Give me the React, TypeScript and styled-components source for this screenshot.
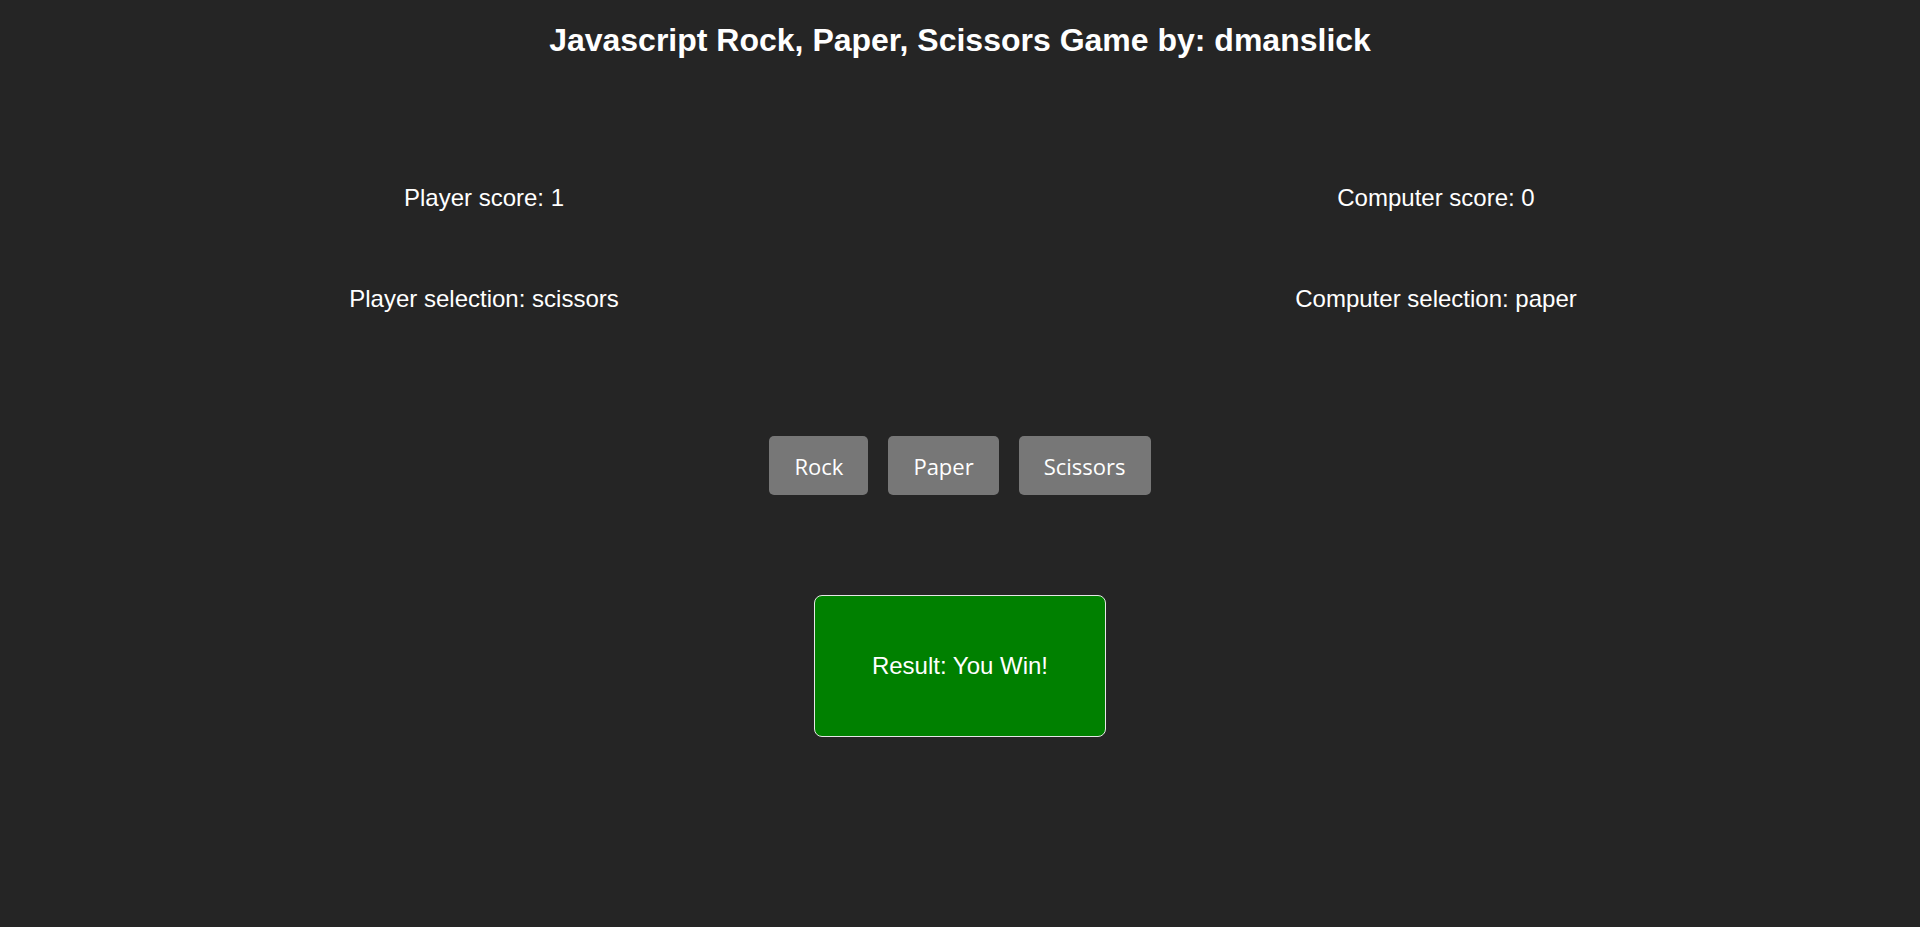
import React from "react";
import styled, { createGlobalStyle } from "styled-components";

const GlobalStyle = createGlobalStyle`
    html, body {
        margin: 0;
        padding: 0;
        background: #252525;
    }

    body {
        min-height: 927px;
        color: #ffffff;
        font-family: "Liberation Sans", Arial, sans-serif;
    }
`;

type Side = {
    name: string;
    score: number;
    selection: string;
};

const sides: Side[] = [
    { name: "Player", score: 1, selection: "scissors" },
    { name: "Computer", score: 0, selection: "paper" },
];

const choices = ["Rock", "Paper", "Scissors"];

const App: React.FC = () => {
    return (
        <>
            <GlobalStyle />
            <Page>
                <Title>Javascript Rock, Paper, Scissors Game by: dmanslick</Title>
                <ScoreBoard>
                    {sides.map((side) => (
                        <SideColumn key={side.name}>
                            <Line>
                                {side.name} score: {side.score}
                            </Line>
                            <Line>
                                {side.name} selection: {side.selection}
                            </Line>
                        </SideColumn>
                    ))}
                </ScoreBoard>
                <Choices>
                    {choices.map((choice) => (
                        <ChoiceButton key={choice} type="button">
                            {choice}
                        </ChoiceButton>
                    ))}
                </Choices>
                <ResultBox $win>Result: You Win!</ResultBox>
            </Page>
        </>
    );
};

export default App;

const Page = styled.div`
    padding: 0 8px;
    display: flex;
    flex-direction: column;
    align-items: center;
`;

const Title = styled.h1`
    margin: 22px 0 0;
    font-size: 32px;
    line-height: 37px;
    font-weight: 700;
    text-align: center;
`;

const ScoreBoard = styled.div`
    width: 100%;
    margin-top: 125px;
    display: grid;
    grid-template-columns: 1fr 1fr;
`;

const SideColumn = styled.div`
    display: flex;
    flex-direction: column;
    align-items: center;
    gap: 73px;
`;

const Line = styled.div`
    font-size: 24px;
    line-height: 28px;
`;

const Choices = styled.div`
    margin-top: 123px;
    display: flex;
    gap: 20px;
`;

const ChoiceButton = styled.button`
    height: 59px;
    padding: 0 25px;
    border: none;
    border-radius: 5px;
    background: #777777;
    color: #ffffff;
    font-family: "Open Sans", "Noto Sans", sans-serif;
    font-size: 22px;
    cursor: pointer;
`;

const ResultBox = styled.div<{ $win?: boolean }>`
    margin-top: 100px;
    width: 292px;
    height: 142px;
    box-sizing: border-box;
    display: flex;
    align-items: center;
    justify-content: center;
    border: 1px solid #e6e6e6;
    border-radius: 8px;
    background: ${(p) => (p.$win ? "#008000" : "#800000")};
    font-size: 24px;
`;
